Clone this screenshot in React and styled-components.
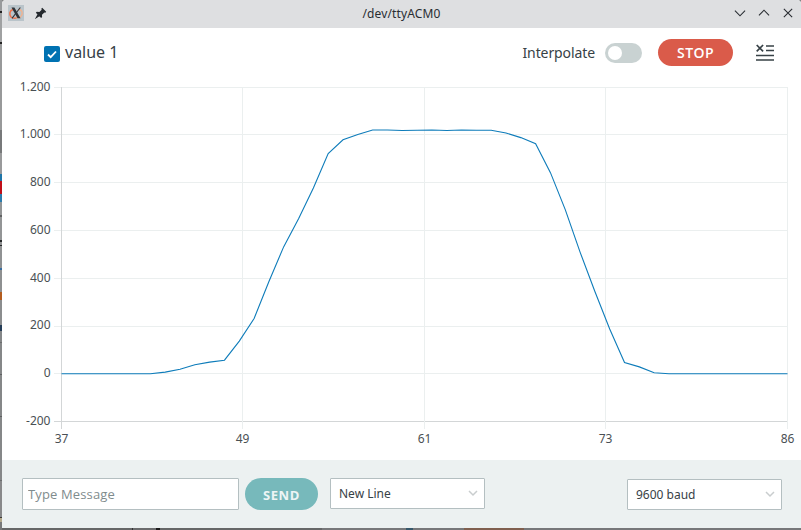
import React, { useState } from "react";
import styled, { createGlobalStyle } from "styled-components";

const GlobalStyle = createGlobalStyle`
  * { box-sizing: border-box; }
  body { margin: 0; overflow: hidden; }
  button, input { font-family: inherit; }
`;

const Desktop = styled.div`
  width: 801px;
  height: 530px;
  display: grid;
  grid-template-columns: 2px 799px;
  grid-template-rows: 528px 2px;
  background: #838485;
  font-family: "Noto Sans", "Open Sans", sans-serif;
  color: #374146;
`;

const EdgeStrip = styled.div`
  grid-row: 1 / 3;
  background: linear-gradient(
    #989a9c 0 11px, #222 11px 13px, #a0a1a2 13px 42px, #222 42px 44px,
    #98999a 44px 130px, #77797a 130px 153px, #999a9b 153px 174px,
    #1f75a8 174px 181px, #c00f19 181px 194px, #2b7cad 194px 202px,
    #939596 202px 215px, #606263 215px 217px, #939596 217px 240px,
    #26282a 240px 242px, #909293 242px 245px, #26282a 245px 246px,
    #909293 246px 268px, #386da0 268px 270px, #8e9091 270px 292px,
    #b35c1f 292px 300px, #8b8d8e 300px 325px, #253d57 325px 331px,
    #858788 331px 342px, #6b6d6e 342px 343px, #858788 343px 374px,
    #5e6061 374px 375px, #858788 375px 416px, #5e6061 416px 417px,
    #858788 417px 480px, #6b6d6e 480px 481px, #88898a 481px 517px,
    #3c3a37 517px 518px, #b3a98c 518px 522px, #77797a 522px 530px
  );
`;

const BottomStrip = styled.div`
  background: linear-gradient(
    90deg, #666768 0 130px, #333 130px 131px, #6b6c6d 131px 154px, #1b1b1b 154px 158px,
    #666768 158px 320px, #77787a 320px 404px, #36586b 404px 411px, #77787a 411px 462px,
    #80604f 462px 522px, #77787a 522px
  );
`;

const Window = styled.main`
  display: flex;
  flex-direction: column;
  background: #fff;
  border-radius: 4px 4px 0 0;
  overflow: hidden;
`;

const TitleBar = styled.header`
  height: 28px;
  flex: none;
  display: grid;
  grid-template-columns: 1fr auto 1fr;
  align-items: center;
  padding: 0 7px 2px 6px;
  background: #dedfe1;
  color: #292d32;
`;

const Title = styled.h1`
  margin: 0;
  padding: 2px 0 0 1px;
  font-size: 12px;
  line-height: 18px;
  letter-spacing: 0.12px;
  font-weight: 400;
`;

const TitleGroup = styled.div`
  display: flex;
  align-items: center;
  gap: ${(p) => p.$gap}px;
  justify-content: ${(p) => (p.$end ? "flex-end" : "flex-start")};
`;

const Icon = styled.svg`
  display: block;
  flex: none;
`;

const Toolbar = styled.div`
  height: 52px;
  flex: none;
  display: flex;
  align-items: center;
  padding: 0 27px 4px 42px;
`;

const SeriesToggle = styled.label`
  display: flex;
  align-items: center;
  gap: 5px;
  margin-right: auto;
  font-size: 16px;
  line-height: 22px;
`;

const CheckMark = styled.span`
  width: 16px;
  height: 16px;
  margin-top: 4px;
  border-radius: 2px;
  background: #0072b2;
  display: grid;
  place-items: center;
`;

const SwitchLabel = styled.span`
  font-size: 14px;
  line-height: 20px;
  letter-spacing: -0.1px;
  margin-top: 2px;
`;

const Switch = styled.button`
  width: 37px;
  height: 20px;
  margin: 2px 16px 0 10px;
  padding: 3px;
  border: 0;
  border-radius: 10px;
  background: #c9d2d2;
  display: flex;
  justify-content: ${(p) => (p.$on ? "flex-end" : "flex-start")};
`;

const Knob = styled.span`
  width: 14px;
  height: 14px;
  border-radius: 50%;
  background: #fff;
`;

const PillButton = styled.button`
  width: ${(p) => p.$width}px;
  height: ${(p) => p.$height}px;
  border: 0;
  padding: ${(p) => p.$nudge || 0}px 0 0;
  border-radius: 16px;
  background: ${(p) => p.$color};
  color: ${(p) => p.$text || "#fff"};
  font-family: "Open Sans", sans-serif;
  font-weight: ${(p) => p.$weight || 600};
  font-size: ${(p) => p.$size || 14}px;
  letter-spacing: ${(p) => p.$tracking || 0.4}px;
`;

const ClearButton = styled.button`
  margin-left: 23px;
  padding: 0;
  border: 0;
  background: none;
`;

const ChartSvg = styled.svg`
  display: block;
  flex: none;
  overflow: visible;
  text {
    font-family: "Noto Sans", sans-serif;
    font-size: 12px;
    fill: #4a5054;
  }
`;

const Footer = styled.footer`
  height: 68px;
  flex: none;
  display: flex;
  align-items: center;
  padding: 0 19px 0 20px;
  background: #ecf1f1;
`;

const MessageInput = styled.input`
  width: 217px;
  height: 32px;
  margin-right: 6px;
  padding: 0 5px 1px;
  border: 1px solid #b4bfc1;
  border-radius: 1px;
  background: #fff;
  font-family: "Open Sans", sans-serif;
  font-size: 13px;
  letter-spacing: 0.14px;
  outline: none;
  &::placeholder { color: #7f8c8d; opacity: 1; }
`;

const SelectBox = styled.div`
  width: 155px;
  height: 31px;
  display: flex;
  align-items: center;
  justify-content: space-between;
  margin: ${(p) => p.$margin};
  padding: 0 6px 1px 8px;
  border: 1px solid #b4bfc1;
  border-radius: 1px;
  background: #fff;
  font-size: 12px;
`;

const SAMPLES = [
  0, 0, 0, 0, 0, 0, 0, 7, 19, 38, 49, 57, 137, 232, 387, 533, 650, 779, 923, 981,
  1003, 1022, 1022, 1020, 1021, 1022, 1020, 1022, 1021, 1021, 1009, 990, 964, 843,
  688, 510, 345, 188, 47, 29, 4, 0, 0, 0, 0, 0, 0, 0, 0, 0,
];
const PLOT = { left: 59.5, right: 785.5, top: 7.5, bottom: 341.5 };
// [label, grid line, text baseline]
const Y_TICKS = [
  ["1.200", 7.5, 11], ["1.000", 54.5, 58], ["800", 102.5, 106], ["600", 150.5, 154],
  ["400", 198.5, 202], ["200", 246.5, 249], ["0", 293.5, 297], ["-200", 341.5, 345],
];
const X_TICKS = [[59.5, 37], [240.5, 49], [422.5, 61], [603.5, 73], [785.5, 86]];

const toX = (i) => PLOT.left + (i * (PLOT.right - PLOT.left)) / (SAMPLES.length - 1);
const toY = (v) => PLOT.top + ((1200 - v) * (PLOT.bottom - PLOT.top)) / 1400;

function Chart() {
  return (
    <ChartSvg width="799" height="380" viewBox="0 0 799 380">
      {Y_TICKS.map(([label, y, baseline]) => (
        <g key={label}>
          <path d={`M52 ${y}H786`} stroke={label === "-200" ? "#d3d6d7" : "#ebefef"} />
          <text x="48.5" y={baseline} textAnchor="end">{label}</text>
        </g>
      ))}
      {X_TICKS.map(([x, label], i) => (
        <g key={label}>
          <path d={`M${x} 7V349`} stroke={i === 0 ? "#d3d6d7" : "#ebefef"} />
          <text x={x} y="363" textAnchor="middle">{label}</text>
        </g>
      ))}
      <polyline
        points={SAMPLES.map((v, i) => `${toX(i).toFixed(2)},${toY(v).toFixed(2)}`).join(" ")}
        fill="none" stroke="#0e7cba" strokeWidth="1.1"
      />
    </ChartSvg>
  );
}

function SelectArrow() {
  return (
    <Icon width="10" height="8" viewBox="0 0 10 8">
      <path d="M1 2l4 4 4-4" fill="none" stroke="#c9cdce" strokeWidth="1.5" />
    </Icon>
  );
}

export default function App() {
  const [interpolate, setInterpolate] = useState(false);
  return (
    <>
      <GlobalStyle />
      <Desktop>
        <EdgeStrip />
        <Window>
          <TitleBar>
            <TitleGroup $gap={10}>
              <Icon width="16" height="16" viewBox="0 0 16 16">
                <path d="M0 0h16v16H0z" fill="#bac4ca" />
                <path d="M5 4.5C1.5 5.5 1 9.5 3 12c2 1.5 4.5 1.5 6 .5" fill="none" stroke="#ef7048" strokeWidth="1.5" />
                <path d="M10.5 4.5c3.5 0 4.5 3.5 3 6-1 2-3 2.5-5 2" fill="none" stroke="#f4b18c" strokeWidth="1.3" />
                <path d="M3.5 2.5h2.9l6.1 10.8H9.5z" fill="#303337" />
                <path d="M12.3 2.5L4 13.3" stroke="#303337" strokeWidth="1.1" />
              </Icon>
              <Icon width="13" height="13" viewBox="0 0 13 13">
                <path d="M8.2 .8l4 4-.9.9-.9-.3-2.4 2.4.1 2.3-1 1L1.8 5.8l1-1 2.6.2L7.7 2.7l-.4-1zM3.5 7.3l1.9 1.9L.8 12.2z" fill="#25292e" />
              </Icon>
            </TitleGroup>
            <Title>/dev/ttyACM0</Title>
            <TitleGroup $gap={12} $end>
              {["M1 4l5.5 5.5L12 4", "M1 9l5.5-5.5L12 9", "M2 2l9 9M11 2l-9 9"].map((d) => (
                <Icon key={d} width="12" height="12" viewBox="0 0 13 13">
                  <path d={d} fill="none" stroke="#292d32" strokeWidth="1.2" />
                </Icon>
              ))}
            </TitleGroup>
          </TitleBar>
          <Toolbar>
            <SeriesToggle>
              <CheckMark>
                <Icon width="10" height="9" viewBox="0 0 10 9">
                  <path d="M1 4.5l2.7 2.7L9 1.5" fill="none" stroke="#fff" strokeWidth="1.8" />
                </Icon>
              </CheckMark>
              value 1
            </SeriesToggle>
            <SwitchLabel>Interpolate</SwitchLabel>
            <Switch $on={interpolate} onClick={() => setInterpolate(!interpolate)} aria-label="Interpolate">
              <Knob />
            </Switch>
            <PillButton $width={75} $height={27} $color="#da5b4a">STOP</PillButton>
            <ClearButton aria-label="Clear output">
              <Icon width="18" height="17" viewBox="0 0 18 17">
                <path d="M.7 1l6.4 6.4M7.1 1L.7 7.4M10 2h8M10 6.5h8M0 11.5h18M0 16h18" fill="none" stroke="#374146" strokeWidth="1.7" />
              </Icon>
            </ClearButton>
          </Toolbar>
          <Chart />
          <Footer>
            <MessageInput placeholder="Type Message" />
            <PillButton $width={73} $height={32} $color="#77b9bb" $text="#edf5f5" $nudge={1} $weight={700} $size={13} $tracking={0.6}>SEND</PillButton>
            <SelectBox $margin="0 auto 1px 12px">New Line<SelectArrow /></SelectBox>
            <SelectBox $margin="1px 0 0">9600 baud<SelectArrow /></SelectBox>
          </Footer>
        </Window>
        <BottomStrip />
      </Desktop>
    </>
  );
}
